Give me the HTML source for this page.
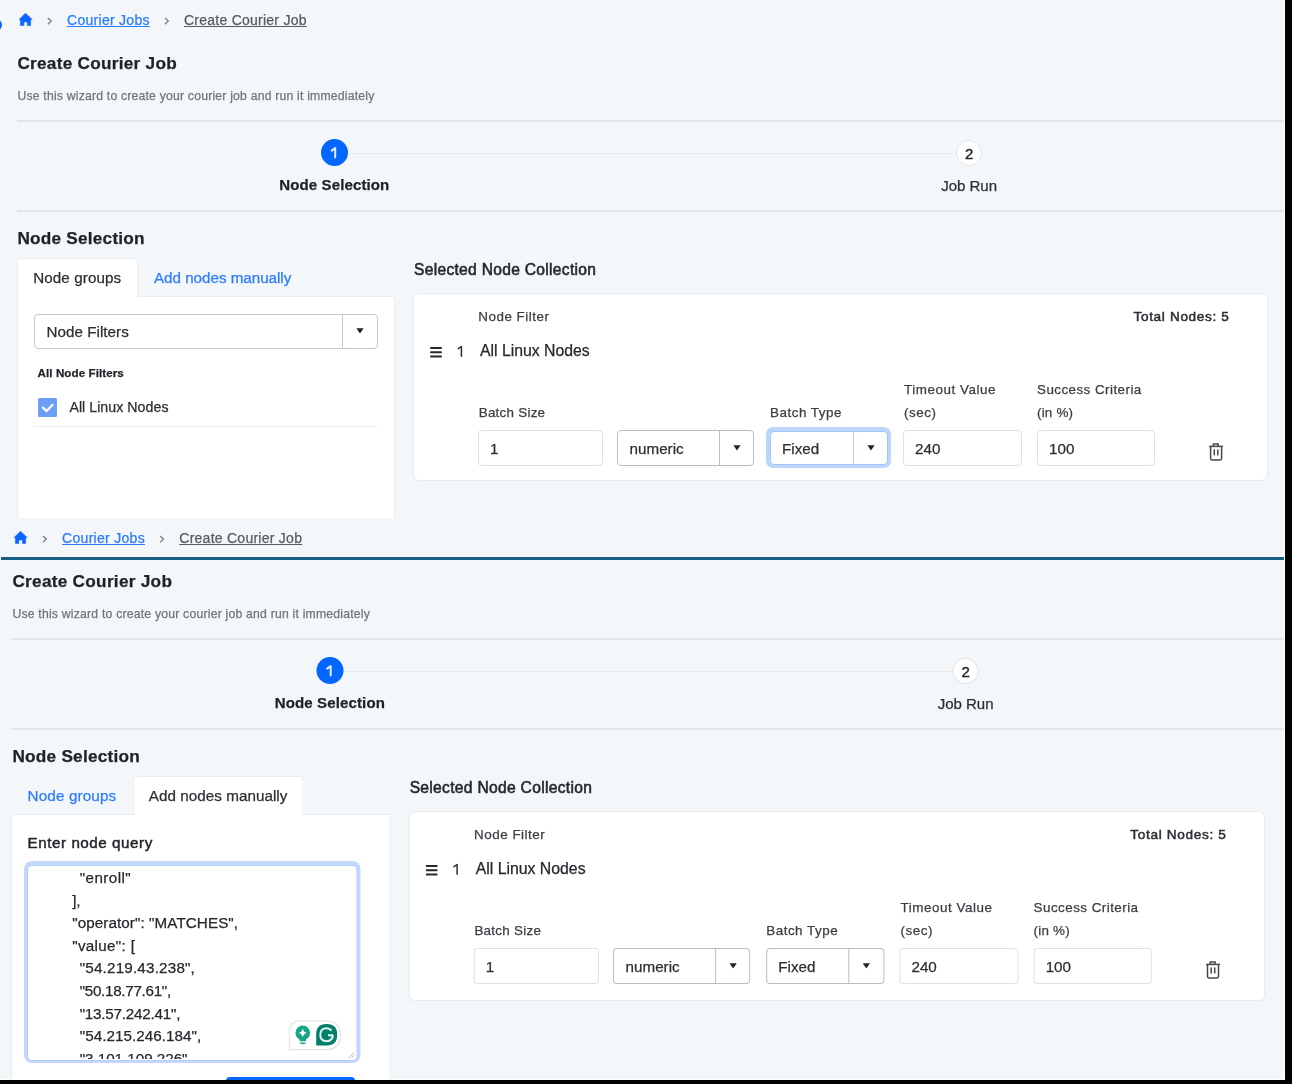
<!DOCTYPE html>
<html><head><meta charset="utf-8"><style>
html,body{margin:0;padding:0;}
body{width:1292px;height:1084px;background:#000;position:relative;overflow:hidden;font-family:"Liberation Sans",sans-serif;}
.t{position:absolute;white-space:nowrap;line-height:1;-webkit-text-stroke-width:0.25px;}
.b{position:absolute;}
.scr{position:absolute;overflow:hidden;background:#f3f7fa;}
.in{position:absolute;left:0;top:0;width:1400px;height:1200px;will-change:transform;}
</style></head><body>
<div class="scr" style="left:0;top:0;width:1285px;height:1080px;background:#fff;"></div>
<div class="scr" style="left:0;top:0;width:1284px;height:518px;">
<div class="in" style="left:0;top:0;">
<div class="b" style="left:-10px;top:19px;width:12px;height:12px;border-radius:50%;background:#0a66ff;"></div>
<svg class="b" style="left:19px;top:12.6px" width="14" height="14" viewBox="0 0 14 14"><path d="M6.5 0.2 L13.2 6.6 L11.6 6.6 L11.6 12.6 L8.4 12.6 L8.4 9.0 L4.8 9.0 L4.8 12.6 L1.5 12.6 L1.5 6.6 L0 6.6 Z" fill="#0a66ff" stroke="#0a66ff" stroke-width="0.6" stroke-linejoin="round"/></svg>
<svg class="b" style="left:46px;top:16px" width="8" height="10" viewBox="0 0 8 10"><path d="M1.9 1.9 L5.3 5.1 L1.9 8.3" fill="none" stroke="#7d8186" stroke-width="1.35"/></svg>
<div class="t" style="left:67.00px;top:13.15px;font-size:14px;font-weight:400;color:#2c7bff;letter-spacing:0.284px;text-decoration:underline;text-underline-offset:1px;">Courier Jobs</div>
<svg class="b" style="left:163px;top:16px" width="8" height="10" viewBox="0 0 8 10"><path d="M1.9 1.9 L5.3 5.1 L1.9 8.3" fill="none" stroke="#7d8186" stroke-width="1.35"/></svg>
<div class="t" style="left:184.00px;top:13.15px;font-size:14px;font-weight:400;color:#565c62;letter-spacing:0.247px;text-decoration:underline;text-underline-offset:1px;">Create Courier Job</div>
<div class="t" style="left:17.40px;top:54.54px;font-size:17.2px;font-weight:700;color:#1e2227;letter-spacing:0.266px;">Create Courier Job</div>
<div class="t" style="left:17.40px;top:89.97px;font-size:12.2px;font-weight:400;color:#6f757b;letter-spacing:0.211px;">Use this wizard to create your courier job and run it immediately</div>
<div class="b" style="left:17px;top:120px;width:1283px;height:2px;background:#e3e6e9;"></div>
<div class="b" style="left:346px;top:152.5px;width:612px;height:1.5px;background:#e6e8eb;"></div>
<div class="b" style="left:320.8px;top:138.8px;width:27.0px;height:27.0px;border-radius:50%;background:#0366fe;"></div>
<svg class="b" style="left:330px;top:146px" width="8" height="13" viewBox="0 0 8 13"><path d="M1.7 4.6 L5.2 2.0 V11.6" fill="none" stroke="#e3edff" stroke-width="2" stroke-linejoin="round" stroke-linecap="round"/></svg>
<div class="b" style="left:956px;top:139.5px;width:26px;height:26.0px;border-radius:50%;background:#fff;border:1px solid #e3e5e8;box-sizing:border-box;"></div>
<div class="t" style="left:964.90px;top:145.80px;font-size:15.0px;font-weight:400;color:#1e2227;letter-spacing:0.000px;-webkit-text-stroke:0.4px #1e2227;">2</div>
<div class="t" style="left:279.30px;top:177.20px;font-size:15px;font-weight:700;color:#1e2227;letter-spacing:0.125px;">Node Selection</div>
<div class="t" style="left:941.30px;top:178.10px;font-size:15px;font-weight:400;color:#2b2f33;letter-spacing:-0.029px;">Job Run</div>
<div class="b" style="left:17px;top:210px;width:1283px;height:2px;background:#e3e6e9;"></div>
<div class="t" style="left:17.40px;top:230.14px;font-size:17.2px;font-weight:700;color:#1e2227;letter-spacing:0.233px;">Node Selection</div>
<div class="b" style="left:17px;top:295.5px;width:378px;height:904.5px;background:#fff;border:1px solid #eaedf0;box-sizing:border-box;"></div>
<div class="b" style="left:17.2px;top:257.5px;width:120.8px;height:39.5px;background:#fff;border:1px solid #eaedf0;border-bottom:none;border-radius:4px 4px 0 0;box-sizing:border-box;"></div>
<div class="t" style="left:33.20px;top:270.13px;font-size:15.2px;font-weight:400;color:#2b2f33;letter-spacing:0.098px;">Node groups</div>
<div class="t" style="left:154.00px;top:270.13px;font-size:15.2px;font-weight:400;color:#2c7bff;letter-spacing:-0.018px;">Add nodes manually</div>
<div class="b" style="left:34px;top:314px;width:344px;height:35px;border:1px solid #c5c8cc;border-radius:4px;background:#fff;box-sizing:border-box;"></div>
<div class="b" style="left:342px;top:314px;width:1px;height:35px;background:#c5c8cc;"></div>
<svg class="b" style="left:356px;top:328.3px" width="8" height="6" viewBox="0 0 8 6"><path d="M0.4 0.3 L7.6 0.3 L4 5.6 Z" fill="#1f2226"/></svg>
<div class="t" style="left:46.50px;top:324.13px;font-size:15.2px;font-weight:400;color:#2b2f33;letter-spacing:0.034px;">Node Filters</div>
<div class="t" style="left:37.60px;top:367.18px;font-size:11.6px;font-weight:700;color:#1e2227;letter-spacing:0.074px;">All Node Filters</div>
<div class="b" style="left:38px;top:398px;width:19px;height:19px;background:#6b9ef5;border-radius:1.5px;"></div>
<svg class="b" style="left:38px;top:398px" width="19" height="19" viewBox="0 0 19 19"><path d="M4.9 9.6 L8.6 13.1 L14.6 6.8" fill="none" stroke="#fff" stroke-width="2.2" stroke-linecap="round" stroke-linejoin="round"/></svg>
<div class="t" style="left:69.40px;top:400.38px;font-size:14.2px;font-weight:400;color:#2b2f33;letter-spacing:0.036px;">All Linux Nodes</div>
<div class="b" style="left:34px;top:426px;width:344px;height:1px;background:#e9ecef;"></div>
<div class="t" style="left:414.00px;top:261.89px;font-size:15.6px;font-weight:400;color:#24282c;letter-spacing:0.296px;-webkit-text-stroke:0.55px #24282c;">Selected Node Collection</div>
<div class="b" style="left:412.8px;top:293px;width:855.6000000000001px;height:188.2px;background:#fff;border:1.6px solid #e8ebee;border-radius:6px;box-sizing:border-box;"></div>
<div class="t" style="left:478.30px;top:310.26px;font-size:13.4px;font-weight:400;color:#3a3e43;letter-spacing:0.517px;">Node Filter</div>
<div class="t" style="left:1133.50px;top:310.19px;font-size:13.6px;font-weight:400;color:#2b2f33;letter-spacing:0.656px;-webkit-text-stroke:0.5px #2b2f33;">Total Nodes: 5</div>
<svg class="b" style="left:430px;top:346.6px" width="13" height="11" viewBox="0 0 13 11"><g stroke="#25282c" stroke-width="2" stroke-linecap="round"><path d="M1 1 H11"/><path d="M1 5.2 H11"/><path d="M1 9.4 H11"/></g></svg>
<svg class="b" style="left:456px;top:345px" width="8" height="13" viewBox="0 0 8 13"><path d="M2.3 3.6 L5.4 1.5 V11.3" fill="none" stroke="#2b2f33" stroke-width="1.5" stroke-linejoin="round" stroke-linecap="round"/></svg>
<div class="t" style="left:480.00px;top:343.23px;font-size:15.8px;font-weight:400;color:#24282c;letter-spacing:-0.008px;">All Linux Nodes</div>
<div class="t" style="left:478.70px;top:406.26px;font-size:13.4px;font-weight:400;color:#3a3e43;letter-spacing:0.261px;">Batch Size</div>
<div class="t" style="left:770.00px;top:406.26px;font-size:13.4px;font-weight:400;color:#3a3e43;letter-spacing:0.522px;">Batch Type</div>
<div class="t" style="left:904.00px;top:383.06px;font-size:13.4px;font-weight:400;color:#3a3e43;letter-spacing:0.543px;">Timeout Value</div>
<div class="t" style="left:904.00px;top:406.26px;font-size:13.4px;font-weight:400;color:#3a3e43;letter-spacing:0.563px;">(sec)</div>
<div class="t" style="left:1037.00px;top:383.06px;font-size:13.4px;font-weight:400;color:#3a3e43;letter-spacing:0.452px;">Success Criteria</div>
<div class="t" style="left:1037.00px;top:406.26px;font-size:13.4px;font-weight:400;color:#3a3e43;letter-spacing:0.205px;">(in %)</div>
<div class="b" style="left:478px;top:430px;width:124.5px;height:36px;border:1px solid #dde1e5;border-radius:4px;background:#fff;box-sizing:border-box;"></div>
<div class="t" style="left:490.00px;top:440.63px;font-size:15.2px;font-weight:400;color:#2b2f33;letter-spacing:0.000px;">1</div>
<div class="b" style="left:617.4px;top:430px;width:136.20000000000005px;height:36px;border:1px solid #b9bcc0;border-radius:4px;background:#fff;box-sizing:border-box;"></div>
<div class="b" style="left:718.9px;top:430px;width:1.0px;height:36px;background:#b9bcc0;"></div>
<div class="t" style="left:629.60px;top:440.63px;font-size:15.2px;font-weight:400;color:#2b2f33;letter-spacing:0.000px;">numeric</div>
<svg class="b" style="left:732.75px;top:445.0px" width="8" height="6" viewBox="0 0 8 6"><path d="M0.4 0.3 L7.6 0.3 L4 5.6 Z" fill="#1f2226"/></svg>
<div class="b" style="left:766.1px;top:427.1px;width:124.5px;height:41.099999999999966px;border-radius:7px;background:#bed5fb;"></div>
<div class="b" style="left:769.6px;top:430.6px;width:118.0px;height:34.599999999999966px;border:1.3px solid #a3c3f9;border-radius:4px;background:#fff;box-sizing:border-box;"></div>
<div class="b" style="left:852.6px;top:431.6px;width:1.0px;height:32.599999999999966px;background:#b8cdf3;"></div>
<div class="t" style="left:782.00px;top:440.53px;font-size:15.2px;font-weight:400;color:#2b2f33;letter-spacing:0.000px;">Fixed</div>
<svg class="b" style="left:866.6px;top:444.9px" width="8" height="6" viewBox="0 0 8 6"><path d="M0.4 0.3 L7.6 0.3 L4 5.6 Z" fill="#1f2226"/></svg>
<div class="b" style="left:903px;top:430px;width:118.60000000000002px;height:36px;border:1px solid #dde1e5;border-radius:4px;background:#fff;box-sizing:border-box;"></div>
<div class="t" style="left:915.00px;top:440.63px;font-size:15.2px;font-weight:400;color:#2b2f33;letter-spacing:0.000px;">240</div>
<div class="b" style="left:1037px;top:430px;width:118.29999999999995px;height:36px;border:1px solid #dde1e5;border-radius:4px;background:#fff;box-sizing:border-box;"></div>
<div class="t" style="left:1049.00px;top:440.63px;font-size:15.2px;font-weight:400;color:#2b2f33;letter-spacing:0.000px;">100</div>
<svg class="b" style="left:1208.5px;top:443px" width="16" height="18" viewBox="0 0 16 18"><g fill="none" stroke="#45484c" stroke-width="1.5"><path d="M0.2 3.4 H14.0"/><path d="M4.4 3.0 V1.1 H9.2 V3.0"/><path d="M1.6 3.4 V15.6 Q1.6 16.9 2.9 16.9 H11.3 Q12.6 16.9 12.6 15.6 V3.4"/><path d="M5.3 6.4 V12.4"/><path d="M8.8 6.4 V12.4"/></g></svg>
</div></div>
<div class="scr" style="left:0;top:518px;width:1284px;height:560.5px;">
<div class="in" style="left:-5px;top:0;transform:scaleX(1.00158);transform-origin:17px 0;">
<svg class="b" style="left:19px;top:12.6px" width="14" height="14" viewBox="0 0 14 14"><path d="M6.5 0.2 L13.2 6.6 L11.6 6.6 L11.6 12.6 L8.4 12.6 L8.4 9.0 L4.8 9.0 L4.8 12.6 L1.5 12.6 L1.5 6.6 L0 6.6 Z" fill="#0a66ff" stroke="#0a66ff" stroke-width="0.6" stroke-linejoin="round"/></svg>
<svg class="b" style="left:46px;top:16px" width="8" height="10" viewBox="0 0 8 10"><path d="M1.9 1.9 L5.3 5.1 L1.9 8.3" fill="none" stroke="#7d8186" stroke-width="1.35"/></svg>
<div class="t" style="left:67.00px;top:13.15px;font-size:14px;font-weight:400;color:#2c7bff;letter-spacing:0.284px;text-decoration:underline;text-underline-offset:1px;">Courier Jobs</div>
<svg class="b" style="left:163px;top:16px" width="8" height="10" viewBox="0 0 8 10"><path d="M1.9 1.9 L5.3 5.1 L1.9 8.3" fill="none" stroke="#7d8186" stroke-width="1.35"/></svg>
<div class="t" style="left:184.00px;top:13.15px;font-size:14px;font-weight:400;color:#565c62;letter-spacing:0.247px;text-decoration:underline;text-underline-offset:1px;">Create Courier Job</div>
<div class="t" style="left:17.40px;top:54.54px;font-size:17.2px;font-weight:700;color:#1e2227;letter-spacing:0.266px;">Create Courier Job</div>
<div class="t" style="left:17.40px;top:89.97px;font-size:12.2px;font-weight:400;color:#6f757b;letter-spacing:0.211px;">Use this wizard to create your courier job and run it immediately</div>
<div class="b" style="left:17px;top:120px;width:1283px;height:2px;background:#e3e6e9;"></div>
<div class="b" style="left:346px;top:152.5px;width:612px;height:1.5px;background:#e6e8eb;"></div>
<div class="b" style="left:320.8px;top:138.8px;width:27.0px;height:27.0px;border-radius:50%;background:#0366fe;"></div>
<svg class="b" style="left:330px;top:146px" width="8" height="13" viewBox="0 0 8 13"><path d="M1.7 4.6 L5.2 2.0 V11.6" fill="none" stroke="#e3edff" stroke-width="2" stroke-linejoin="round" stroke-linecap="round"/></svg>
<div class="b" style="left:956px;top:139.5px;width:26px;height:26.0px;border-radius:50%;background:#fff;border:1px solid #e3e5e8;box-sizing:border-box;"></div>
<div class="t" style="left:964.90px;top:145.80px;font-size:15.0px;font-weight:400;color:#1e2227;letter-spacing:0.000px;-webkit-text-stroke:0.4px #1e2227;">2</div>
<div class="t" style="left:279.30px;top:177.20px;font-size:15px;font-weight:700;color:#1e2227;letter-spacing:0.125px;">Node Selection</div>
<div class="t" style="left:941.30px;top:178.10px;font-size:15px;font-weight:400;color:#2b2f33;letter-spacing:-0.029px;">Job Run</div>
<div class="b" style="left:17px;top:210px;width:1283px;height:2px;background:#e3e6e9;"></div>
<div class="t" style="left:17.40px;top:230.14px;font-size:17.2px;font-weight:700;color:#1e2227;letter-spacing:0.233px;">Node Selection</div>
<div class="b" style="left:16px;top:296px;width:379px;height:904px;background:#fff;border:1px solid #eaedf0;box-sizing:border-box;"></div>
<div class="b" style="left:137.5px;top:258px;width:170.0px;height:39px;background:#fff;border:1px solid #eaedf0;border-bottom:none;border-radius:4px 4px 0 0;box-sizing:border-box;"></div>
<div class="t" style="left:32.60px;top:270.13px;font-size:15.2px;font-weight:400;color:#2c7bff;letter-spacing:0.138px;">Node groups</div>
<div class="t" style="left:153.60px;top:270.13px;font-size:15.2px;font-weight:400;color:#2b2f33;letter-spacing:0.040px;">Add nodes manually</div>
<div class="t" style="left:32.60px;top:317.13px;font-size:15.2px;font-weight:400;color:#1f2327;letter-spacing:0.528px;-webkit-text-stroke:0.45px #1f2327;">Enter node query</div>
<div class="b" style="left:28.8px;top:342.9px;width:336.4px;height:202.60000000000002px;border-radius:8px;background:#c5d8fc;"></div>
<div class="b" style="left:32.1px;top:346.5px;width:329.9px;height:196.0px;border:1.8px solid #b2cdfb;border-radius:5px;background:#fff;box-sizing:border-box;"></div>
<div class="b" style="left:33.9px;top:348.3px;width:326.3px;height:192.4px;overflow:hidden;">
<div class="t" style="left:50.70px;top:3.73px;font-size:15.2px;font-weight:400;color:#25292d;letter-spacing:0.435px;">&quot;enroll&quot;</div>
<div class="t" style="left:43.20px;top:26.33px;font-size:15.2px;font-weight:400;color:#25292d;letter-spacing:-0.036px;">],</div>
<div class="t" style="left:43.20px;top:48.93px;font-size:15.2px;font-weight:400;color:#25292d;letter-spacing:0.082px;">&quot;operator&quot;: &quot;MATCHES&quot;,</div>
<div class="t" style="left:43.20px;top:71.53px;font-size:15.2px;font-weight:400;color:#25292d;letter-spacing:0.321px;">&quot;value&quot;: [</div>
<div class="t" style="left:50.70px;top:94.13px;font-size:15.2px;font-weight:400;color:#25292d;letter-spacing:0.190px;">&quot;54.219.43.238&quot;,</div>
<div class="t" style="left:50.70px;top:116.73px;font-size:15.2px;font-weight:400;color:#25292d;letter-spacing:-0.300px;">&quot;50.18.77.61&quot;,</div>
<div class="t" style="left:50.70px;top:139.33px;font-size:15.2px;font-weight:400;color:#25292d;letter-spacing:-0.224px;">&quot;13.57.242.41&quot;,</div>
<div class="t" style="left:50.70px;top:161.93px;font-size:15.2px;font-weight:400;color:#25292d;letter-spacing:0.051px;">&quot;54.215.246.184&quot;,</div>
<div class="t" style="left:50.70px;top:184.53px;font-size:15.2px;font-weight:400;color:#25292d;letter-spacing:-0.017px;">&quot;3.101.109.226&quot;,</div>
</div>
<svg class="b" style="left:293px;top:502px" width="54" height="31" viewBox="0 0 54 31"><path d="M0.8 29.6 V12 Q0.8 1 12 1 H38 Q52 1 52 15.3 Q52 29.6 38 29.6 Z" fill="#fff" stroke="#e1e2e8" stroke-width="1.2"/><circle cx="14.3" cy="12.9" r="7.3" fill="#17a689"/><path d="M10.4 17.8 H18.2 L17.3 21.2 H11.3 Z" fill="#17a689"/><path d="M11.3 22.6 H17.3 Q17.3 24.3 14.3 24.3 Q11.3 24.3 11.3 22.6 Z" fill="#17a689"/><path d="M14.3 8.6 Q15 12.2 18.3 12.9 Q15 13.6 14.3 17.2 Q13.6 13.6 10.3 12.9 Q13.6 12.2 14.3 8.6 Z" fill="#fff"/><path d="M27.7 25.5 V14.2 Q27.7 4 38.2 4 Q48.7 4 48.7 14.8 Q48.7 25.5 38.2 25.5 Z" fill="#047f6a"/><path d="M44.5 15.2 H39.5 M44.5 15.2 Q44 21.2 38.1 21.2 Q31.8 21.2 31.8 14.8 Q31.8 8.3 38.1 8.3 Q41.2 8.3 43 10.5" fill="none" stroke="#e6f3ef" stroke-width="2"/></svg>
<svg class="b" style="left:352px;top:533px" width="8" height="8" viewBox="0 0 8 8"><path d="M7 1 L1 7 M7 4 L4 7" stroke="#aaa" stroke-width="0.8"/></svg>
<div class="t" style="left:414.00px;top:261.89px;font-size:15.6px;font-weight:400;color:#24282c;letter-spacing:0.296px;-webkit-text-stroke:0.55px #24282c;">Selected Node Collection</div>
<div class="b" style="left:412.8px;top:293px;width:855.6000000000001px;height:189.5px;background:#fff;border:1.6px solid #e8ebee;border-radius:6px;box-sizing:border-box;"></div>
<div class="t" style="left:478.30px;top:310.26px;font-size:13.4px;font-weight:400;color:#3a3e43;letter-spacing:0.517px;">Node Filter</div>
<div class="t" style="left:1133.50px;top:310.19px;font-size:13.6px;font-weight:400;color:#2b2f33;letter-spacing:0.656px;-webkit-text-stroke:0.5px #2b2f33;">Total Nodes: 5</div>
<svg class="b" style="left:430px;top:346.6px" width="13" height="11" viewBox="0 0 13 11"><g stroke="#25282c" stroke-width="2" stroke-linecap="round"><path d="M1 1 H11"/><path d="M1 5.2 H11"/><path d="M1 9.4 H11"/></g></svg>
<svg class="b" style="left:456px;top:345px" width="8" height="13" viewBox="0 0 8 13"><path d="M2.3 3.6 L5.4 1.5 V11.3" fill="none" stroke="#2b2f33" stroke-width="1.5" stroke-linejoin="round" stroke-linecap="round"/></svg>
<div class="t" style="left:480.00px;top:343.23px;font-size:15.8px;font-weight:400;color:#24282c;letter-spacing:-0.008px;">All Linux Nodes</div>
<div class="t" style="left:478.70px;top:406.26px;font-size:13.4px;font-weight:400;color:#3a3e43;letter-spacing:0.261px;">Batch Size</div>
<div class="t" style="left:770.00px;top:406.26px;font-size:13.4px;font-weight:400;color:#3a3e43;letter-spacing:0.522px;">Batch Type</div>
<div class="t" style="left:904.00px;top:383.06px;font-size:13.4px;font-weight:400;color:#3a3e43;letter-spacing:0.543px;">Timeout Value</div>
<div class="t" style="left:904.00px;top:406.26px;font-size:13.4px;font-weight:400;color:#3a3e43;letter-spacing:0.563px;">(sec)</div>
<div class="t" style="left:1037.00px;top:383.06px;font-size:13.4px;font-weight:400;color:#3a3e43;letter-spacing:0.452px;">Success Criteria</div>
<div class="t" style="left:1037.00px;top:406.26px;font-size:13.4px;font-weight:400;color:#3a3e43;letter-spacing:0.205px;">(in %)</div>
<div class="b" style="left:478px;top:430px;width:124.5px;height:36px;border:1px solid #dde1e5;border-radius:4px;background:#fff;box-sizing:border-box;"></div>
<div class="t" style="left:490.00px;top:440.63px;font-size:15.2px;font-weight:400;color:#2b2f33;letter-spacing:0.000px;">1</div>
<div class="b" style="left:617.4px;top:430px;width:136.20000000000005px;height:36px;border:1px solid #b9bcc0;border-radius:4px;background:#fff;box-sizing:border-box;"></div>
<div class="b" style="left:718.9px;top:430px;width:1.0px;height:36px;background:#b9bcc0;"></div>
<div class="t" style="left:629.60px;top:440.63px;font-size:15.2px;font-weight:400;color:#2b2f33;letter-spacing:0.000px;">numeric</div>
<svg class="b" style="left:732.75px;top:445.0px" width="8" height="6" viewBox="0 0 8 6"><path d="M0.4 0.3 L7.6 0.3 L4 5.6 Z" fill="#1f2226"/></svg>
<div class="b" style="left:769.5px;top:430px;width:118.0px;height:36px;border:1px solid #b9bcc0;border-radius:4px;background:#fff;box-sizing:border-box;"></div>
<div class="b" style="left:852.2px;top:430px;width:1.0px;height:36px;background:#b9bcc0;"></div>
<div class="t" style="left:782.00px;top:440.63px;font-size:15.2px;font-weight:400;color:#2b2f33;letter-spacing:0.000px;">Fixed</div>
<svg class="b" style="left:866.35px;top:445.0px" width="8" height="6" viewBox="0 0 8 6"><path d="M0.4 0.3 L7.6 0.3 L4 5.6 Z" fill="#1f2226"/></svg>
<div class="b" style="left:903px;top:430px;width:118.60000000000002px;height:36px;border:1px solid #dde1e5;border-radius:4px;background:#fff;box-sizing:border-box;"></div>
<div class="t" style="left:915.00px;top:440.63px;font-size:15.2px;font-weight:400;color:#2b2f33;letter-spacing:0.000px;">240</div>
<div class="b" style="left:1037px;top:430px;width:118.29999999999995px;height:36px;border:1px solid #dde1e5;border-radius:4px;background:#fff;box-sizing:border-box;"></div>
<div class="t" style="left:1049.00px;top:440.63px;font-size:15.2px;font-weight:400;color:#2b2f33;letter-spacing:0.000px;">100</div>
<svg class="b" style="left:1208.5px;top:443px" width="16" height="18" viewBox="0 0 16 18"><g fill="none" stroke="#45484c" stroke-width="1.5"><path d="M0.2 3.4 H14.0"/><path d="M4.4 3.0 V1.1 H9.2 V3.0"/><path d="M1.6 3.4 V15.6 Q1.6 16.9 2.9 16.9 H11.3 Q12.6 16.9 12.6 15.6 V3.4"/><path d="M5.3 6.4 V12.4"/><path d="M8.8 6.4 V12.4"/></g></svg>
</div>
<div class="b" style="left:1px;top:38.5px;width:1290px;height:3px;background:#1b5e85;"></div>
</div>
<div class="b" style="left:225.8px;top:1077.2px;width:128.8px;height:6px;background:#0766fc;border-radius:4px 4px 0 0;"></div>
<div class="b" style="left:0;top:1080px;width:1292px;height:4px;background:#000;"></div>
</body></html>
